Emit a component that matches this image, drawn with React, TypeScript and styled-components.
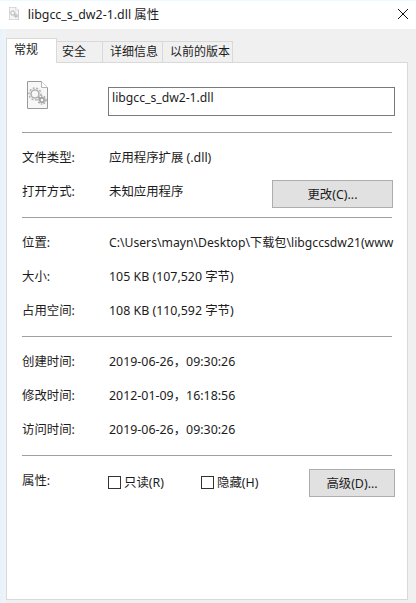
import React from "react";
import styled, { createGlobalStyle } from "styled-components";

const GlobalStyle = createGlobalStyle`
  html, body {
    margin: 0;
    padding: 0;
    background: #f0f0f0;
  }
  * {
    box-sizing: border-box;
  }
`;

const Window = styled.div`
  width: 416px;
  height: 603px;
  overflow: hidden;
  display: flex;
  flex-direction: column;
  color: #1c1c1c;
  font-family: "Noto Sans", "Noto Sans CJK SC", sans-serif;
  font-size: 12.4px;
  background: #f0f0f0;
`;

const TitleBar = styled.div`
  height: 29px;
  flex: none;
  display: flex;
  align-items: center;
  gap: 9px;
  padding: 0 8px 3px 9px;
  background: #fff;
  border-top: 1px solid #eafcff;
`;

const TitleText = styled.span`
  flex: 1;
`;

const Body = styled.div`
  flex: 1;
  display: flex;
  flex-direction: column;
  padding: 9px 8px 3px 6px;
  background: linear-gradient(to right, #e9f2fa 0, #eef4f9 6px, #f0f0f0 6px);
  min-height: 0;
`;

const TabStrip = styled.div`
  height: 25px;
  flex: none;
  display: flex;
  align-items: flex-end;
  margin-bottom: -1px;
`;

const Tab = styled.div<{ $active?: boolean; $w: number; $inset: number }>`
  position: relative;
  z-index: ${(p) => (p.$active ? 1 : 0)};
  width: ${(p) => p.$w}px;
  height: ${(p) => (p.$active ? 25 : 22)}px;
  display: flex;
  align-items: center;
  padding-left: ${(p) => p.$inset}px;
  padding-bottom: ${(p) => (p.$active ? 4 : 2)}px;
  background: ${(p) => (p.$active ? "#fff" : "#f0f0f0")};
  border: 1px solid #d9d9d9;
  border-left-width: ${(p) => (p.$active ? 1 : 0)}px;
  border-bottom-width: ${(p) => (p.$active ? 0 : 1)}px;
  font-size: 12px;
`;

const Panel = styled.div`
  flex: 1;
  min-height: 0;
  background: #fff;
  border: 1px solid #d9d9d9;
  padding: 0 15px;
`;

const Header = styled.div`
  height: 70px;
  display: flex;
  align-items: flex-start;
  padding: 18px 0 0 5px;
  border-bottom: 1px solid #a0a0a0;
`;

const IconSlot = styled.div`
  width: 81px;
  flex: none;
`;

const NameField = styled.div`
  width: 287px;
  height: 29px;
  flex: none;
  margin-top: 6px;
  padding: 0 3px;
  border: 1px solid #7a7a7a;
  font-size: 12.2px;
  line-height: 20px;
`;

const Section = styled.div<{ $last?: boolean }>`
  padding: 7px 0 ${(p) => (p.$last ? 0 : 9)}px;
  border-bottom: ${(p) => (p.$last ? "none" : "1px solid #a0a0a0")};
`;

const Row = styled.div`
  height: 34px;
  display: flex;
  align-items: center;
`;

const Label = styled.div`
  width: 87px;
  flex: none;
`;

const Value = styled.div`
  flex: 1;
  min-width: 0;
  white-space: nowrap;
`;

const PathValue = styled(Value)`
  font-size: 12.2px;
`;

const Button = styled.button<{ $w: number }>`
  width: ${(p) => p.$w}px;
  height: 28px;
  flex: none;
  padding: 0;
  background: #e1e1e1;
  border: 1px solid #adadad;
  color: inherit;
  font-family: inherit;
  font-size: inherit;
`;

const ChangeButton = styled(Button)`
  margin: 5px -1px 0 auto;
`;

const AdvancedButton = styled(Button)`
  margin: 5px -3px 0 auto;
`;

const CheckLabel = styled.label<{ $w: number }>`
  width: ${(p) => p.$w}px;
  flex: none;
  display: flex;
  align-items: center;
  gap: 3px;
  margin-top: 4px;
`;

const CheckBox = styled.span`
  width: 13px;
  height: 13px;
  flex: none;
  margin-left: -1px;
  border: 1px solid #333;
  background: #fff;
`;

const DllIcon = ({ size }: { size: number }) => (
  <svg width={size * 0.75} height={size} viewBox="0 0 21 28" fill="none">
    <path d="M.5.5h14l6 6v21H.5z" fill="#f7f7f7" stroke="#9a9a9a" />
    <path d="M14.5.5v6h6" fill="#fff" stroke="#b5b5b5" />
    <circle cx="8" cy="13" r="4" stroke="#b0b0b0" strokeWidth="1.6" />
    <circle cx="8" cy="13" r="6" stroke="#b0b0b0" strokeWidth="1.4" strokeDasharray="2 1.6" />
    <circle cx="15" cy="19" r="2.2" stroke="#989898" strokeWidth="1.4" />
    <circle cx="15" cy="19" r="4" stroke="#989898" strokeWidth="1.2" strokeDasharray="1.6 1.3" />
  </svg>
);

const CloseIcon = () => (
  <svg width="10" height="10" viewBox="0 0 10 10" fill="none" stroke="#111" strokeWidth="1">
    <path d="M0 0l10 10M10 0L0 10" />
  </svg>
);

const App = () => {
  return (
    <Window>
      <GlobalStyle />
      <TitleBar>
        <DllIcon size={13} />
        <TitleText>libgcc_s_dw2-1.dll 属性</TitleText>
        <CloseIcon />
      </TitleBar>
      <Body>
        <TabStrip>
          <Tab $active $w={51} $inset={7}>常规</Tab>
          <Tab $w={46} $inset={5}>安全</Tab>
          <Tab $w={60} $inset={7}>详细信息</Tab>
          <Tab $w={70} $inset={7}>以前的版本</Tab>
        </TabStrip>
        <Panel>
          <Header>
            <IconSlot>
              <DllIcon size={28} />
            </IconSlot>
            <NameField>libgcc_s_dw2-1.dll</NameField>
          </Header>
          <Section>
            <Row>
              <Label>文件类型:</Label>
              <Value>应用程序扩展 (.dll)</Value>
            </Row>
            <Row>
              <Label>打开方式:</Label>
              <Value>未知应用程序</Value>
              <ChangeButton $w={121}>更改(C)...</ChangeButton>
            </Row>
          </Section>
          <Section>
            <Row>
              <Label>位置:</Label>
              <PathValue>C:\Users\mayn\Desktop\下载包\libgccsdw21(www</PathValue>
            </Row>
            <Row>
              <Label>大小:</Label>
              <Value>105 KB (107,520 字节)</Value>
            </Row>
            <Row>
              <Label>占用空间:</Label>
              <Value>108 KB (110,592 字节)</Value>
            </Row>
          </Section>
          <Section>
            <Row>
              <Label>创建时间:</Label>
              <Value>2019-06-26，09:30:26</Value>
            </Row>
            <Row>
              <Label>修改时间:</Label>
              <Value>2012-01-09，16:18:56</Value>
            </Row>
            <Row>
              <Label>访问时间:</Label>
              <Value>2019-06-26，09:30:26</Value>
            </Row>
          </Section>
          <Section $last>
            <Row>
              <Label>属性:</Label>
              <CheckLabel $w={93}>
                <CheckBox />
                只读(R)
              </CheckLabel>
              <CheckLabel $w={100}>
                <CheckBox />
                隐藏(H)
              </CheckLabel>
              <AdvancedButton $w={86}>高级(D)...</AdvancedButton>
            </Row>
          </Section>
        </Panel>
      </Body>
    </Window>
  );
};

export default App;
